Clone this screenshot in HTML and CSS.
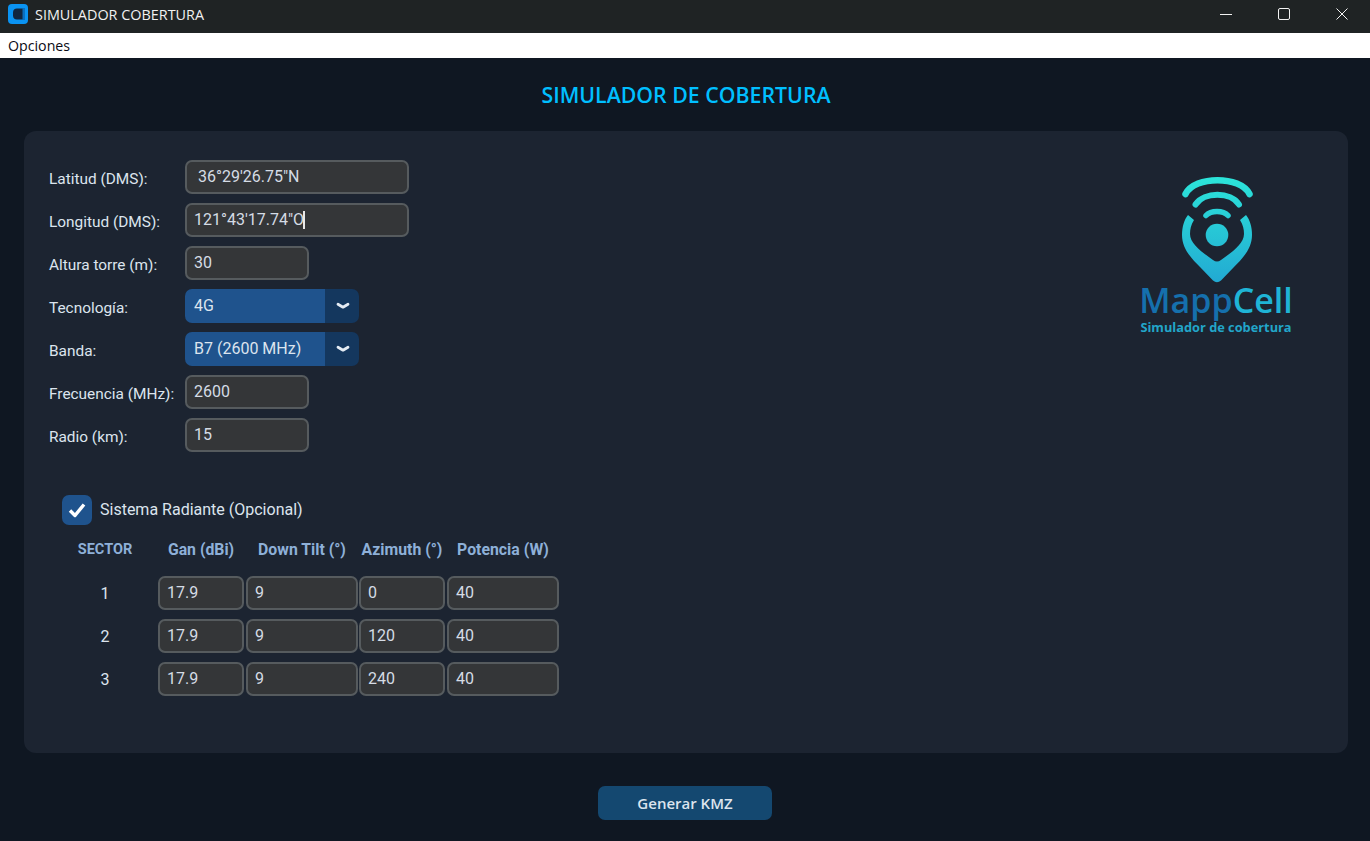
FILE: index.html
```html
<!DOCTYPE html>
<html lang="es">
<head>
<meta charset="utf-8">
<title>SIMULADOR COBERTURA</title>
<link rel="stylesheet" href="styles.css">
</head>
<body>
<header class="titlebar">
  <svg class="app-icon" width="20" height="20" viewBox="0 0 20 20"><rect width="20" height="20" rx="4" fill="#0a93f2"/><path d="M9 4.500h7.500v11H9c-2.500 0-4-1.500-4-4v-3c0-2.500 1.500-4 4-4z" fill="#11263f"/><rect x="14.500" y="4" width="2.500" height="12" fill="#0a6fc0"/></svg>
  <span class="app-title">SIMULADOR COBERTURA</span>
  <div class="win-controls">
    <svg class="win-btn" width="12" height="12" viewBox="0 0 12 12"><path d="M0 6.500h12" stroke="#f2f2f2" fill="none"/></svg>
    <svg class="win-btn" width="12" height="12" viewBox="0 0 12 12"><rect x="0.500" y="0.500" width="11" height="11" rx="1.500" stroke="#f2f2f2" fill="none"/></svg>
    <svg class="win-btn" width="12" height="12" viewBox="0 0 12 12"><path d="M0.500 0.500l11 11M11.500 0.500l-11 11" stroke="#f2f2f2" fill="none"/></svg>
  </div>
</header>
<nav class="menubar">Opciones</nav>
<main class="app">
  <h1 class="heading">SIMULADOR DE COBERTURA</h1>
  <section class="card">
    <div class="form-col">
      <div class="form-grid">
        <label class="label">Latitud (DMS):</label>
        <div class="field field-long field-indent">36°29'26.75"N</div>
        <label class="label">Longitud (DMS):</label>
        <div class="field field-long">121°43'17.74"O<span class="caret"></span></div>
        <label class="label">Altura torre (m):</label>
        <div class="field field-short">30</div>
        <label class="label">Tecnología:</label>
        <div class="select"><span class="select-value">4G</span><span class="select-arrow"><svg width="14" height="8" viewBox="0 0 14 8"><path d="M2 2.200l5 3 5-3" stroke="#e4ebf3" stroke-width="2.800" fill="none" stroke-linecap="round" stroke-linejoin="round"/></svg></span></div>
        <label class="label">Banda:</label>
        <div class="select"><span class="select-value">B7 (2600 MHz)</span><span class="select-arrow"><svg width="14" height="8" viewBox="0 0 14 8"><path d="M2 2.200l5 3 5-3" stroke="#e4ebf3" stroke-width="2.800" fill="none" stroke-linecap="round" stroke-linejoin="round"/></svg></span></div>
        <label class="label">Frecuencia (MHz):</label>
        <div class="field field-short">2600</div>
        <label class="label">Radio (km):</label>
        <div class="field field-short">15</div>
      </div>
      <div class="check-row">
        <span class="checkbox"><svg width="20" height="18" viewBox="0 0 20 18"><path d="M3 9.500l5 5 9-11" stroke="#fff" stroke-width="3.400" fill="none" stroke-linejoin="round"/></svg></span>
        <span class="check-label">Sistema Radiante (Opcional)</span>
      </div>
      <div class="sector-grid">
        <div class="th th-sector">SECTOR</div>
        <div class="th narrow">Gan (dBi)</div>
        <div class="th wide">Down Tilt (°)</div>
        <div class="th narrow">Azimuth (°)</div>
        <div class="th wide">Potencia (W)</div>

        <div class="sector-num">1</div>
        <div class="field narrow">17.9</div>
        <div class="field wide">9</div>
        <div class="field narrow">0</div>
        <div class="field wide">40</div>

        <div class="sector-num">2</div>
        <div class="field narrow">17.9</div>
        <div class="field wide">9</div>
        <div class="field narrow">120</div>
        <div class="field wide">40</div>

        <div class="sector-num">3</div>
        <div class="field narrow">17.9</div>
        <div class="field wide">9</div>
        <div class="field narrow">240</div>
        <div class="field wide">40</div>
      </div>
    </div>
    <div class="logo">
      <svg class="logo-mark" width="80" height="108" viewBox="57 10 80 108">
        <defs>
          <linearGradient id="lg" gradientUnits="userSpaceOnUse" x1="97" y1="12" x2="97" y2="118">
            <stop offset="0" stop-color="#2ce5da"/>
            <stop offset="1" stop-color="#22a9d2"/>
          </linearGradient>
        </defs>
        <g fill="none" stroke="url(#lg)" stroke-linecap="round">
          <path d="M65.500 29C75 10.500 120 10.500 129.500 29" stroke-width="6.500"/>
          <path d="M75.500 39.500C84 26.500 111 26.500 119 39.500" stroke-width="6"/>
          <path d="M86 50.500C91 45 103 45 108 50.500" stroke-width="5.500"/>
        </g>
        <path fill="url(#lg)" d="M68 50C64 55 62 62 62 70C62 84 72 94 80 102L93 115.500Q97 119 101 115.500L114 102C122 94 132 84 132 70C132 62 130 55 126 50L120 55C123 60 124 64 124 69C124 79 112 87 101 95Q97 98 93 95C82 87 70 79 70 69C70 64 71 60 74 55Z"/>
        <circle cx="97" cy="70" r="11.300" fill="url(#lg)"/>
      </svg>
      <div class="logo-name"><span class="logo-mapp">Mapp</span><span class="logo-cell">Cell</span></div>
      <div class="logo-sub">Simulador de cobertura</div>
    </div>
  </section>
  <div class="actions"><button class="primary" type="button">Generar KMZ</button></div>
</main>
</body>
</html>
```
FILE: styles.css
```css
* { box-sizing: border-box; }
html, body { margin: 0; height: 100%; }
body {
  display: flex;
  flex-direction: column;
  height: 841px;
  overflow: hidden;
  background: #0f1722;
  font-family: Roboto, "Liberation Sans", sans-serif;
  color: #dce4ee;
}
.titlebar {
  height: 33px;
  background: #1f2324;
  display: flex;
  align-items: center;
  padding-left: 8px;
  color: #f1f1f1;
  font-family: "Open Sans", "Liberation Sans", sans-serif;
  font-size: 14.400px;
}
.app-icon { margin-top: -5px; }
.app-title { margin-left: 7px; margin-top: -4px; }
.win-controls {
  margin-left: auto;
  display: flex;
  gap: 46px;
  padding-right: 22px;
  margin-top: -5px;
}
.win-btn { display: block; }
.menubar {
  height: 25px;
  background: #fff;
  color: #0a0a14;
  font-family: "Open Sans", "Liberation Sans", sans-serif;
  font-size: 14.200px;
  line-height: 25px;
  padding-left: 8px;
}
.app { flex: 1; padding: 0 22px 0 24px; }
.heading {
  margin: 0;
  height: 73px;
  padding-top: 21px;
  line-height: 32px;
  text-align: center;
  font-family: "Open Sans", "Liberation Sans", sans-serif;
  font-size: 21.300px;
  font-weight: 600;
  color: #00bfff;
}
.card {
  height: 622px;
  background: #1c2431;
  border-radius: 12px;
  padding: 29px 0 0 25px;
  display: flex;
  justify-content: space-between;
}
.form-grid {
  display: grid;
  grid-template-columns: 136px auto;
  row-gap: 9px;
  justify-items: start;
}
.label {
  align-self: center;
  padding-top: 4px;
  font-size: 15.400px;
  line-height: 20px;
}
.field {
  height: 34px;
  background: #343638;
  border: 2px solid #565b5e;
  border-radius: 7px;
  padding: 0 7px;
  font-size: 16px;
  line-height: 30px;
  color: #d5dce5;
  white-space: nowrap;
}
.field-long { width: 224px; }
.field-short { width: 124px; }
.field-indent { padding-left: 11px; }
.caret {
  display: inline-block;
  width: 2px;
  height: 18px;
  background: #e8e8e8;
  vertical-align: -4px;
  margin-left: -1px;
}
.select {
  width: 174px;
  height: 34px;
  display: flex;
  border-radius: 7px;
  overflow: hidden;
  font-size: 16px;
  line-height: 34px;
}
.select-value { width: 140px; background: #1f538d; padding-left: 9px; }
.select-arrow {
  flex: 1;
  background: #14375e;
  display: flex;
  align-items: center;
  justify-content: center;
  padding-left: 2px;
}
.check-row {
  display: flex;
  align-items: center;
  margin: 43px 0 0 13px;
  height: 30px;
}
.checkbox {
  width: 30px;
  height: 30px;
  border-radius: 7px;
  background: #1f538d;
  display: flex;
  align-items: center;
  justify-content: center;
}
.check-label { margin: -2px 0 0 8px; font-size: 16px; }
.sector-grid {
  display: grid;
  grid-template-columns: 109px 88px 113px 88px 112px;
  row-gap: 9px;
  margin-top: 8px;
  align-items: center;
}
.narrow { width: 86px; }
.wide { width: 112px; }
.th {
  height: 34px;
  line-height: 34px;
  text-align: center;
  font-size: 15.800px;
  font-weight: 700;
  color: #8eb0d8;
  white-space: nowrap;
}
.th-sector { font-size: 14.500px; padding-left: 3px; }
.sector-num { text-align: center; padding-left: 3px; font-size: 16px; }
.logo {
  width: 152px;
  margin: 15px 56px 0 0;
  display: flex;
  flex-direction: column;
  align-items: center;
}
.logo-mark { display: block; margin-left: 1px; }
.logo-name {
  display: flex;
  font-family: "Open Sans", "Liberation Sans", sans-serif;
  font-size: 34px;
  font-weight: 600;
  line-height: 30px;
  white-space: nowrap;
  margin-top: 2px;
}
.logo-mapp { color: #1570ad; }
.logo-cell { color: #1fb4d6; }
.logo-sub {
  font-family: "Open Sans", "Liberation Sans", sans-serif;
  font-size: 12.800px;
  font-weight: 700;
  line-height: 14px;
  color: #22a6c9;
  white-space: nowrap;
  margin-top: 5px;
}
.actions { display: flex; justify-content: center; padding: 33px 2px 0 0; }
.primary {
  width: 174px;
  height: 34px;
  border: 0;
  border-radius: 7px;
  background: #144870;
  color: #dce4ee;
  font-family: "Open Sans", "Liberation Sans", sans-serif;
  font-size: 15px;
  font-weight: 600;
}
```
